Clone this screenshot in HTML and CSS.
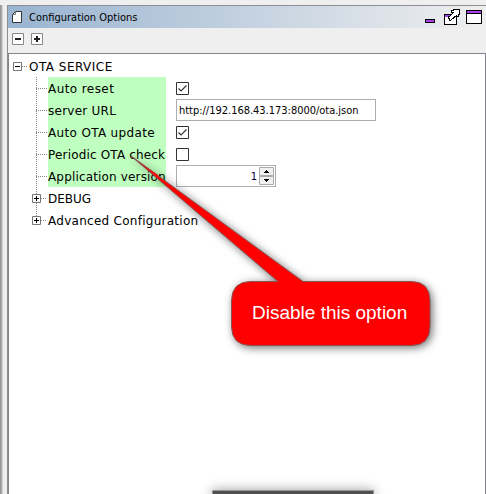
FILE: index.html
```html
<!DOCTYPE html>
<html lang="en">
<head>
<meta charset="utf-8">
<title>Configuration Options</title>
<link rel="stylesheet" href="styles.css">
</head>
<body>
<main class="window">
  <div class="splitter"></div>
  <section class="panel">
    <header class="titlebar">
      <svg class="doc" width="10" height="12" viewBox="0 0 10 12"><path d="M3.5 .5h6v11h-9v-8z" fill="#fff" stroke="#333"/><path d="M.5 3.5h3v-3" fill="none" stroke="#777"/></svg>
      <h1 class="title"><span class="t-title">Configuration Options</span></h1>
      <svg class="controls" width="58" height="16" viewBox="0 0 58 16" shape-rendering="crispEdges">
        <path d="M.5 10.5h9v3h-9z" fill="#a640ea" stroke="#000"/>
        <path d="M19.5 5.5h12v10h-12z" fill="#fff" stroke="#000"/><path d="M20 6h11v2H20z" fill="#a640ea"/>
        <path d="M26.500 1.500h2v-1h6v5h-1v2h-2v-1l-6 5h-1v-2h-1v-2h1l4-4h-2z" fill="#fff" stroke="#000"/>
        <path d="M41.500 1.500h15v13h-15z" fill="#fff" stroke="#000"/><path d="M42 2h14v2H42z" fill="#a640ea"/><path d="M42 4h14v1H42z"/>
      </svg>
    </header>
    <div class="toolbar">
      <svg width="12" height="12" viewBox="0 0 12 12"><path d="M.5.5h11v11H.5z" fill="#fff" stroke="#888"/><path d="M3 5h6v2H3z" fill="#222"/></svg>
      <svg width="12" height="12" viewBox="0 0 12 12"><path d="M.5.5h11v11H.5z" fill="#fff" stroke="#888"/><path d="M3 5h6v2H3zM5 3h2v6H5z" fill="#222"/></svg>
    </div>
    <div class="tree">
      <div class="row root"><svg class="toggle" width="9" height="9" viewBox="0 0 9 9"><path d="M.5.5h8v8h-8z" fill="#fff" stroke="#777"/><path d="M2 4h5v1H2z"/></svg><span class="dots short"></span><span class="name w-root">OTA SERVICE</span></div>
      <div class="children">
        <div class="row"><span class="dots"></span><label class="name option w-reset">Auto reset</label><svg class="check" width="13" height="13" viewBox="0 0 13 13"><path d="M.5.5h12v12H.5z" fill="#fff" stroke="#333"/><path d="M2.500 6.500l2.500 2.500 5.500-5.500" fill="none" stroke="#333" stroke-width="1.200"/></svg></div>
        <div class="row"><span class="dots"></span><label class="name option w-url">server URL</label><div class="field"><span class="t-url">http://192.168.43.173:8000/ota.json</span></div></div>
        <div class="row"><span class="dots"></span><label class="name option w-update">Auto OTA update</label><svg class="check" width="13" height="13" viewBox="0 0 13 13"><path d="M.5.5h12v12H.5z" fill="#fff" stroke="#333"/><path d="M2.500 6.500l2.500 2.500 5.500-5.500" fill="none" stroke="#333" stroke-width="1.200"/></svg></div>
        <div class="row"><span class="dots"></span><label class="name option w-periodic">Periodic OTA check</label><svg class="check" width="13" height="13" viewBox="0 0 13 13"><path d="M.5.5h12v12H.5z" fill="#fff" stroke="#333"/></svg></div>
        <div class="row"><span class="dots"></span><label class="name option w-version">Application version</label><div class="field spinner"><span>1</span><svg width="16" height="18" viewBox="0 0 16 18"><path d="M.5.5h14v8H.5zM.5 9.500h14v8H.5z" fill="#f0f0f0" stroke="#aaa"/><path d="M7 3h1v1h1v1h1v1H5V5h1V4h1zM5 12h5v1H9v1H8v1H7v-1H6v-1H5z" shape-rendering="crispEdges"/></svg></div></div>
        <div class="row branch"><svg class="toggle" width="9" height="9" viewBox="0 0 9 9"><path d="M.5.5h8v8h-8z" fill="#fff" stroke="#777"/><path d="M2 4h5v1H2zM4 2h1v5H4z"/></svg><span class="dots short"></span><span class="name w-debug">DEBUG</span></div>
        <div class="row branch"><svg class="toggle" width="9" height="9" viewBox="0 0 9 9"><path d="M.5.5h8v8h-8z" fill="#fff" stroke="#777"/><path d="M2 4h5v1H2zM4 2h1v5H4z"/></svg><span class="dots short"></span><span class="name w-advanced">Advanced Configuration</span></div>
      </div>
    </div>
  </section>
  <div class="callout">
    <svg width="486" height="494" viewBox="0 0 486 494">
      <defs><linearGradient id="tip" gradientUnits="userSpaceOnUse" x1="130" y1="155" x2="158" y2="177"><stop offset="0" stop-color="#666"/><stop offset="1" stop-color="#f00"/></linearGradient></defs>
      <path d="M131 156L303 281.500H411Q430 281.500 430 301V326Q430 345.500 411 345.500H251Q231.500 345.500 231.500 326V301Q231.500 281.500 251 281.500H278Z" fill="#f00" stroke="#8a5252" stroke-width="1"/>
      <path d="M130.500 155.500L158 175v3Z" fill="url(#tip)"/>
    </svg>
    <p class="message"><span class="t-call">Disable this option</span></p>
  </div>
  <div class="popup"></div>
</main>
</body>
</html>
```

FILE: styles.css
```css
* { box-sizing: border-box; }
body { margin: 0; background: #efefef; color: #000; }
.window { position: relative; display: flex; width: 486px; height: 494px; padding-top: 5px; overflow: hidden; background: #efefef; }
.splitter { flex: none; width: 7px; background: linear-gradient(90deg, #999 0 1px, #aaa 1px 2px, #d0d0d0 2px 3px, #efefef 3px); }
.panel { display: flex; flex: 1; flex-direction: column; border-top: 1px solid #8d8d96; border-left: 1px solid #8d8d96; }
.titlebar { display: flex; flex: none; height: 22px; padding: 4px 3px 0 4px; background: linear-gradient(90deg, #99b4d1, #efefef); }
.doc { margin-top: 1px; }
.title { margin: 0 auto 0 7px; font: 11px/16px "DejaVu Sans Condensed", "DejaVu Sans", sans-serif; font-stretch: condensed; white-space: nowrap; }
.controls { margin-top: -1px; }
.toolbar { display: flex; flex: none; gap: 7px; height: 25px; padding: 5px 4px; }
.tree { flex: 1; padding: 1px 0 0 4px; border: solid #85858d; border-width: 1px 1px 0 1px; background: #fff; font: 12px/22px "DejaVu Sans", sans-serif; }
.row { display: flex; align-items: center; height: 22px; white-space: nowrap; }
.name { height: 22px; line-height: 24px; }
.toggle { flex: none; }
.dots { flex: none; width: 11px; height: 1px; background: repeating-linear-gradient(90deg, #888 0 1px, transparent 1px 2px); }
.dots.short { width: 5px; margin-right: 2px; }
.children { position: relative; margin-left: 23px; }
.children::before { position: absolute; top: 0; left: 0; width: 1px; height: 143px; content: ""; background: repeating-linear-gradient(#888 0 1px, transparent 1px 2px); }
.branch { position: relative; margin-left: -4px; }
.option { width: 118px; margin-right: 10px; background: #bfffbf; }
.w-root { letter-spacing: .48px; }
.w-reset { letter-spacing: .42px; }
.w-url { letter-spacing: .25px; }
.w-update { letter-spacing: .34px; }
.w-periodic { letter-spacing: .17px; }
.w-version { letter-spacing: .16px; }
.w-advanced { letter-spacing: .27px; }
.t-url { letter-spacing: -.02px; }
.row > .dots:first-child { margin-right: 1px; }
.field { display: flex; align-items: center; width: 200px; height: 22px; padding-left: 2px; border: 1px solid #abadb3; background: #fff; font: 11px/20px "DejaVu Sans Condensed", "DejaVu Sans", sans-serif; font-stretch: condensed; }
.field span { height: 20px; line-height: 22px; }
.spinner { justify-content: flex-end; width: 100px; gap: 2px; color: #00003c; }
.callout { position: absolute; inset: 0; }
.callout svg { display: block; filter: drop-shadow(2px 2px 4px rgba(0,0,0,.55)); }
.message { position: absolute; top: 301px; left: 252px; margin: 0; color: #fff; font: 19px/23px "Liberation Sans", Arial, sans-serif; white-space: nowrap; }
.popup { position: absolute; top: 490px; left: 212px; width: 162px; height: 10px; border: 1px solid #999; background: #505050; box-shadow: 0 0 12px rgba(0,0,0,.4); }
```
